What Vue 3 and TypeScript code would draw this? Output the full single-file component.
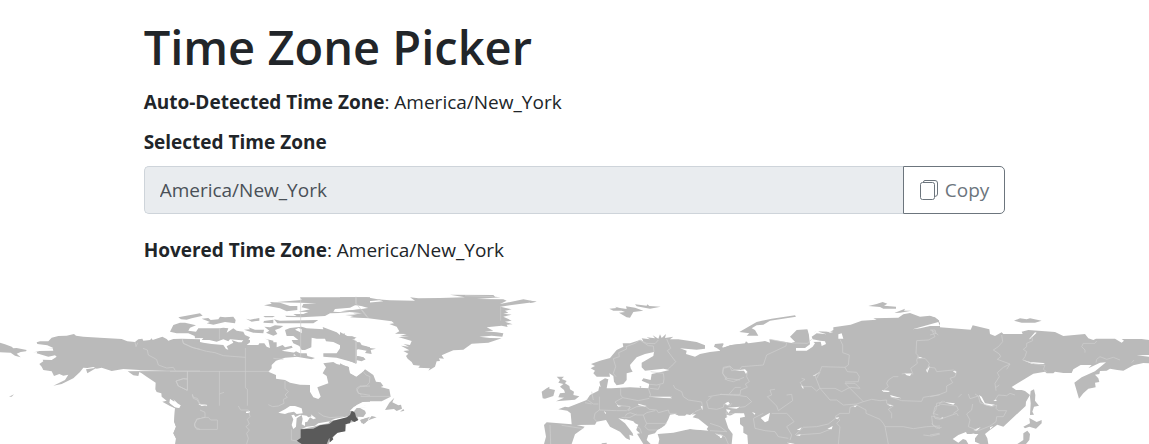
<script setup lang="ts">
import { ref } from 'vue'

interface MapSection {
  offset: number
  land: string[]
  water: string[]
  borders: string[]
}

const detected = ref('America/New_York')
const selected = ref('America/New_York')
const hovered = ref('America/New_York')

function copyZone(): void {
  navigator.clipboard?.writeText(selected.value)
}

const sections: MapSection[] = [
  {
    // Chukotka tip, Alaska and the Pacific coast
    offset: 0,
    land: [
      'M0 188L15 193L35 200L40 205L50 204L80 210L78 214L62 216L50 221L62 232L45 227L32 218L0 217Z',
      'M110 187L120 184L145 184L155 173L175 168L200 167L222 162L228 167L250 170L300 173L365 177L382 184L405 186L415 178L427 176L430 182L450 180L455 175L458 180L487 170L500 177L505 182L520 177L545 176L600 178V492H545L540 485L530 480L520 460L528 440L523 425L525 385L510 378L487 365L500 362L485 350L484 340L470 336L466 328L467 308L440 290L425 280L418 276L415 288L400 286L383 274L500 272L430 271L370 267L335 273L305 263L290 266L280 261L262 264L250 263L240 276L220 295L185 312L160 317L195 300L205 284L190 287L178 282L162 288L155 274L130 270L125 260L118 252L130 244L128 239L155 240L170 230L165 226L145 230L110 220L112 214L100 218L118 213L160 212L158 205L140 205L160 204L142 196L112 192Z',
      'M258 268L290 263L262 280Z',
      'M27 350L42 343L35 350Z',
    ],
    water: ['M510 357L515 363L527 372L522 362L532 370L530 380L542 376L538 384L525 381L508 368Z'],
    borders: ['M405 186L408 200L413 188M429 205L442 210L445 225L462 234L470 239L475 255L500 264L520 262L526 272', 'M418 273H600M562 274V331L535 318L528 303L550 296L562 297', 'M547 178L550 190L575 202L600 208', 'M577 345L580 355L592 360L600 375M600 415L590 417L583 435L590 448L600 448'],
  },
  {
    // Canada and the northern United States
    offset: 510,
    land: [
      'M0 182L25 177L45 178L80 184L100 188L125 192L160 195L168 207L175 209L170 199L190 188L185 180L205 187L215 187L222 178L240 180L240 187L230 195L265 195L268 190L283 190L290 200L300 204L295 180L285 176L310 182L310 187L320 187L320 202L338 195L345 202L365 197L368 203L335 212L375 218L370 226L385 230L345 233L318 242L305 255L305 265L295 275L318 285L318 296L345 300L360 308L390 314L420 315L420 335L430 352L445 357L452 350L442 322L475 310L470 288L458 280L468 262L460 250L490 246L500 252L535 260L540 280L560 291L585 270L600 280V365L578 366L560 375L540 392L560 400L565 420L555 425L530 430L525 453L500 458L475 492H15L18 475L10 460L18 440L12 425L15 385L0 375Z',
      'M25 112L45 108L90 100L98 107L65 115L50 119L33 118Z',
      'M10 135L30 128L45 128L78 136L60 143L55 152L78 155L85 145L150 145L160 143L175 145L170 158L190 145L200 152L220 155L225 165L240 172L235 180L215 181L180 178L175 184L160 178L140 185L118 180L95 180L100 174L75 175L74 168L55 160L20 160L0 155Z',
      'M95 116L115 114L122 120L145 118L150 110L165 112L190 110L197 120L195 130L165 126L130 134L110 130L120 126Z',
      'M228 116L240 119L268 114L268 122L245 125Z M280 108H315L308 112L285 112Z M282 123L310 119V130L280 128Z',
      'M312 118L330 122L445 120L430 130H322Z',
      'M222 149L240 148L235 142L255 149H282L280 160L250 158Z',
      'M283 140L300 142L315 136L340 138L330 145L315 150L322 162L310 167L288 158L298 152Z',
      'M282 76L305 71L300 66L330 68L360 78H382L382 90L350 94L330 85Z',
      'M312 67L395 60L390 52H600V78L555 76L540 83L495 87L490 95L540 98L480 100L465 108L395 112L350 111L345 107L380 108L370 102H400L415 96L385 95L420 88L395 82L400 72L440 70L390 68Z',
      'M515 94L575 88L600 85V113L540 111L570 107L550 101L590 99Z',
      'M345 150L360 144L395 140L410 145L460 148L458 141L500 157L510 165L525 160L522 170L550 173L545 178L555 179L545 185L570 187L575 195L600 202V208L560 206V250L500 233L460 230L460 220L500 220L510 205L515 198L490 186L468 184L465 176L440 176L425 173L424 202L405 210L395 210L388 198L370 190L365 180L385 180L370 168L350 168Z',
      'M370 220L378 214L390 220L410 220L412 228L435 234L425 238L380 230Z',
      'M530 170L545 169L560 173L550 177Z M573 200L585 198L600 205L590 211Z M560 228L580 232L585 240L560 240Z',
      'M570 420L600 410L585 430L575 430Z',
    ],
    water: [
      'M325 398L345 388L360 378L375 378L395 385L398 400L380 402L372 395L355 398L345 402Z',
      'M364 406L372 404L376 411L390 404L395 405L380 415L378 440L370 447L365 435L370 418Z',
      'M395 405L410 407L415 412L425 409L422 403L438 415L430 418L420 412L412 425L405 427L405 438L395 433L398 417Z',
      'M394 448L410 440L435 437L445 430L480 424L475 430L450 434L430 440Z M480 422L495 416L540 408L525 416L495 421Z',
      'M375 149L388 155L395 160L395 148L385 144Z',
      'M85 372L110 374L112 377L95 378Z M228 395L240 393L238 399L228 399Z M0 357L15 366L10 358L22 370L32 376L26 383L15 382L0 370Z',
      'M540 392L552 380L575 375L600 378V383L560 384L552 394Z',
    ],
    borders: [
      'M0 274H298M52 274V331L25 318L18 303L40 296L52 297',
      'M37 178L40 190L70 203L110 214L135 218L160 227L226 232M226 204V323L232 328V377',
      'M148 274V377M148 342L162 337M148 145V178M392 52V230M558 50V70L590 110M558 185V250M310 235L340 238',
      'M67 342L70 352L82 355L90 372L110 378M205 378L212 390H235L240 410L232 418L238 432L228 440L238 450L230 460L235 475L230 492',
      'M90 390L105 397V412L82 418L74 430L75 442L90 448H142V420L122 420L115 412H95M345 302V325L355 335L345 345L352 352L340 358L342 370L325 378L308 380L295 374M445 398L460 408L480 413L520 410M364 448V480L390 485M600 318L570 320L560 330L565 340L600 346',
    ],
  },
  {
    // Greenland, Labrador and the Atlantic provinces
    offset: 1020,
    land: [
      'M0 52H80L125 60L60 66L30 72L28 78H0Z',
      'M0 94L60 88L85 84L50 74L75 69L130 64L110 58L150 61L225 62L210 52L235 55L300 54L375 52L330 44L460 45L465 50L482 52L410 57L490 58L500 62L480 72L550 58L590 65L500 77L482 80L515 88L495 92L505 98L490 101L515 104L490 110L515 122L495 125L518 133L500 134L503 141L485 137L440 142L460 152L433 154L470 157L490 160L487 170L455 167L418 170L450 174L485 175L445 188L395 191L370 209L340 211L322 218L305 226L312 236L297 235L300 243L290 244L285 260L265 272L270 265L235 263L240 257L220 255L215 246L203 236L198 228L205 221L190 213L208 211L183 197L207 200L190 192L210 195L215 183L175 171L207 170L180 168L200 162L165 161L178 154L170 140L148 132L162 130L155 124L85 115L30 112L42 108L15 105L70 103L55 98Z',
      'M0 156L22 168L40 170L45 177L35 178L50 183L48 195L65 201L108 206L92 210L95 222L75 219L80 212L55 208L48 210V251L0 230Z',
      'M52 228L70 232L65 228L77 238L65 244L48 240Z',
      'M0 250L10 255L27 262L28 280L48 291L70 275L75 268L100 285L108 305L122 307L130 318L122 321L148 328L152 350L125 364H62L45 377L22 402L0 415Z',
      'M45 382L75 377L82 381L60 384L75 392L78 400L70 411L52 410L35 398Z',
      'M62 420L80 414L85 420L95 408L110 412L85 421L70 433Z',
      'M135 390L148 368L163 353L157 367L175 376L183 374L186 386L170 393L162 387Z M180 395L190 387L193 392Z',
    ],
    water: [],
    borders: ['M48 52V72M65 88L85 114M482 78V122M375 47L460 50', 'M70 275L78 285L90 290L88 308L80 317L60 318L50 325L55 338L65 345M62 349H150M48 183V251'],
  },
  {
    // Europe and Svalbard
    offset: 1590,
    land: [
      'M0 62L20 65L0 69Z',
      'M238 86L260 84L255 80L270 84L290 87L288 79L315 83L340 92L310 96L300 113L290 112L267 98L285 96L275 92L250 92Z',
      'M315 73L350 77L352 73L358 78L392 80L360 86L320 79Z',
      'M183 252L210 242L240 234L260 210L280 200L278 190L300 190L330 180L340 184L335 175L360 178L350 172L375 175L368 166L385 176L390 163L395 174L408 162L405 174L430 170L420 178L445 178L500 186L525 196L525 206L500 209L450 205L470 212L468 222L495 230L510 222L540 216L572 212L560 204L552 200L555 192L580 190V195L572 198L580 204L600 196L630 192V492H385L388 478L383 462L430 458L480 447L535 452L520 436L495 425L465 418L440 405L420 410L412 432L400 442L382 450L375 460L355 465L350 480L362 492H340L320 460L318 440L290 420L278 417L265 415L285 430L308 460L310 468L298 464L300 480L288 475L270 455L240 440L228 420L200 425L195 434L140 435L164 440L158 446L135 463L125 492H42L48 470L42 435L50 427L125 433L122 400L112 392L85 388L105 380L115 382L170 360L180 345L205 332L208 318L212 322L208 305L225 295L235 298L230 325L245 325L300 322L355 325L358 312L335 302L340 295L362 300L365 282L390 277L418 270L400 266L345 272L335 262L335 248L370 228L372 216L345 222L320 232L300 255L302 265L308 275L290 280V300L280 312L260 316L252 305L250 288L238 280L240 290L200 290L190 280L195 272L182 265L195 258Z',
      'M80 290L102 290L95 297L110 303L105 310L118 318L120 328L132 335L130 345L148 349L135 359L78 364L102 353L85 352L90 340L105 338L102 330L90 320L100 312L85 308L90 300Z',
      'M38 355L35 335L50 325L58 320L58 326L75 330L70 348L45 356Z',
      'M215 490L230 488V492H215Z',
      'M328 320L334 318L332 324Z',
    ],
    water: [
      'M358 350L420 350L426 355L400 354Z M325 371L350 378L345 380L325 375Z M285 417L310 424L315 430L325 434L318 450L330 460L318 462L310 440L290 425Z',
      'M420 404L435 402L445 407H465L470 403L480 405L495 396L485 404L498 402L488 412L505 416L535 440L530 447L510 449L480 447L430 451L395 457L383 462L382 452L405 436L415 418Z',
      'M557 462L578 465L575 474Z M512 377L519 380L517 390Z M222 393L228 398L226 403Z M260 374L275 378L265 380Z M618 425L630 410V432H620Z M590 404L605 408L600 412L590 410Z',
    ],
    borders: [
      'M250 236L257 260L250 280L258 290M250 236L268 230L266 218L290 207L288 200L315 190L330 180L355 197L370 198L372 216M330 180L350 190L375 191L385 180M410 177L422 205L412 212L437 245L425 258L415 266',
      'M362 275L400 280L402 295L400 310L380 315L360 313M360 325L385 328L390 315M355 325L362 345L358 350L426 350M430 315L435 325L455 335L460 350L475 360L515 366L518 385L495 395',
      'M272 325V345L278 353L325 362L358 355M278 353L255 366L265 376L300 380M208 350V390L260 392M208 390L195 400L192 415L200 425M170 358L190 372H205M185 335L190 360M165 368L185 372M300 380L295 392L320 380L345 378L358 388L380 390L385 398L415 390L418 400H440M260 392H290L302 382M285 410L290 402L300 398L320 405L340 405L350 398L375 392M275 412L300 412L320 402M340 405L345 420L350 430H410M350 430L345 440L355 450L382 450M320 440L330 445L335 460',
      'M535 350L575 343H630M545 350L530 365L535 385L560 388L580 382L582 372L600 378L605 370M580 262L600 258L610 268L630 272M580 262L578 280L590 295L630 300M585 300L590 290M540 452L590 455L570 440L540 430M555 460L585 470L595 492M60 435L62 492M95 436L160 446M590 390L588 402L630 400',
    ],
  },
  {
    // Central Russia and Central Asia
    offset: 2160,
    land: [
      'M0 192L10 194L5 204L35 195L75 190L78 184L85 190L135 183L150 188L148 178L215 189L225 185L210 170L230 150L262 148L268 165L280 162L288 154L330 155L340 150L340 142L392 134L425 122L470 119L460 115L535 113L550 103L570 99L600 110L630 107L655 120L660 130V492H0Z',
      'M58 156L80 143L110 126L155 116L225 106L228 110L150 122L130 134L110 136L95 145L105 150L115 167H80L88 160Z',
      'M445 78L470 72L488 66L502 71L492 77L528 80V86H490L480 81Z',
      'M523 99L555 86L552 92L574 92L540 98Z',
    ],
    water: [
      'M265 150L275 162L285 156L290 150L300 157L320 163L290 160L275 170L278 178L300 182L315 184L318 192L305 198L302 185L275 186L270 178L285 190L278 200L260 212L228 212V204L255 204L270 193Z',
      'M355 163L365 160L370 176L355 176Z M578 148L655 126L660 138L630 138L600 145Z M318 152L340 156L330 158Z',
      'M15 415L45 400H72L75 410L58 414L55 428L70 440L70 458L82 465L84 492H35L38 462L25 445Z',
      'M122 414L150 398L145 422L135 427Z M96 396L106 400L104 404Z M15 370L25 365L30 372L22 376Z M18 388L32 390L25 400Z M0 465L5 474L0 474Z M22 383L60 380L50 386Z',
      'M242 315L250 320V328Z M278 288L298 277L285 288Z M228 466L242 462L240 468Z M322 447L338 438L335 448Z M200 488L225 490L210 492Z M230 450L245 442L240 450Z M345 413L358 412L352 418Z M400 378L412 376L405 382Z',
      'M553 280L575 280L570 288L560 286Z M485 330L510 333L505 336L490 335Z M510 345L545 355L515 352Z M500 373L520 376L512 379Z M618 270L630 258L622 278Z M45 272L75 268L82 275L78 282L72 272Z M592 230L608 232L600 235Z',
    ],
    borders: [
      'M150 178L200 188L198 198L140 225L130 255L65 260L60 268L35 272L30 260L10 265L8 280L20 300L40 305L60 297L72 292M82 275L80 290L88 305L76 312L82 322L62 330L60 345M62 322L45 322L28 342M0 343L60 347L80 350L95 365L75 380L60 382',
      'M215 189L262 190L275 178M360 178L368 195V218L388 225L385 255L375 262L305 260L300 275L285 287L300 325L345 325L365 335L390 322L420 325L405 310H375L430 365L455 358L480 362L500 360V370L520 378L505 388L515 400V415M375 262L382 275L410 277L418 290L415 305L375 306M300 325L330 360H350L370 375L410 372L430 365M245 295L255 298L240 308L250 320H275L290 333L300 325',
      'M165 328L150 330L155 345L142 350L150 358L170 378L175 392L192 380L218 362L215 343L200 345M155 400H200L210 410L222 425L200 440L215 465L210 480M130 400L100 415L105 445L135 452L165 455L175 470L205 475M225 465L250 442L290 440L325 432L350 412L360 420L350 430L360 440L355 492M230 465L300 460L330 448M345 410L360 400H388L390 382L410 375L438 390V400L480 418L490 430L495 440L505 492M495 440L550 440L580 446L620 440L660 438M510 350L545 362L605 364L610 352L660 344',
      'M655 165L635 150L645 170L625 180L590 182L588 220L595 228L590 240L592 250L572 265L578 280M592 235L615 235L628 250L620 275M535 290H520L505 300L500 310L505 320L490 332M660 375L645 380L640 400L655 405M660 415L635 408L638 435L660 446M610 465L635 468L660 462M280 288L300 277L290 295M545 282L555 280L580 282',
    ],
  },
  {
    // Eastern Siberia, Kamchatka and Japan
    offset: 2790,
    land: [
      'M0 137L20 135L30 142L122 149L128 136L178 148L180 162L195 168L215 157L220 162H278L275 155L295 150L375 156L400 168L465 162L475 175L490 180L498 176L555 176L575 188L582 182L575 177L635 177L657 180V225L620 226L657 230V250L640 249L610 256L580 272L562 270L540 266L530 272L510 273L508 282L495 284L505 295L508 306L495 308L497 322L475 326L460 340L447 356L433 308L455 292L495 274L528 247L510 248L475 265L485 255H452L430 268L425 279L400 279L375 275L370 280H350L345 275L310 281L245 321L258 330H275L285 333L300 345L288 365L287 378L220 440L202 434L180 450L165 462L172 475L175 492H150L135 485V475L145 462L110 462L100 472L92 475L108 480L115 492H0Z',
      'M0 108L15 112L28 122L20 128L0 132Z',
      'M252 122L270 115L290 118L300 115L335 122L315 128H275Z',
      'M302 333L312 328L316 345L315 362L327 377L312 380L307 395L312 404L300 405L302 370L300 350Z',
      'M298 414L320 426L335 420L335 430L318 446L298 440L285 445L280 440L300 430Z',
      'M280 460L292 452L300 462L298 480L288 492H262L280 480Z',
    ],
    water: [
      'M297 178L315 157L320 158L300 177Z M278 240L300 246L340 249L345 252L305 251Z',
      'M147 345L155 350L165 370L195 374L185 378L165 375L155 362Z M190 363L198 358L200 363Z',
      'M68 274L78 273V280Z M43 367L75 370L70 374Z M30 415L40 412L38 416Z M68 477L85 465L108 456L112 464L135 460L115 470L98 478L85 488Z M130 450L152 442L140 452Z M180 442L190 438L180 448Z',
    ],
    borders: [
      'M215 165L218 185L205 200L190 210L208 222L212 230L202 238L240 252L220 262L202 278L208 290L195 310L198 332M208 315L198 322M240 252L230 268',
      'M305 170L308 182L290 190V200L280 208L290 215L285 230L278 240L315 252L345 256L340 268L350 275M500 183L495 190L460 190L455 200L465 210V218M570 240L550 232L530 238L510 230L500 238L498 248M605 248L612 240',
      'M0 150L15 150L18 160L0 165M0 262L15 264L20 275L70 270L80 275L75 290L60 295L68 308L50 318V335L25 345L0 350M45 365L20 370L18 388L10 400L15 415L30 418L80 400L85 408M38 362L28 372L80 378L85 390L70 400M95 342L85 352M115 342L120 356L145 348L150 368L185 380L200 375L198 385L205 392H230L220 410H200L198 425L180 438L145 452L115 440M145 348L135 342M128 372L125 390L110 402L120 420L115 440M195 360L205 345L230 347L240 340L255 345M5 430L20 445L35 442M0 465L28 460',
    ],
  },
]
</script>

<template>
  <main class="page">
    <section class="details">
      <h1>Time Zone Picker</h1>
      <p class="line"><strong>Auto-Detected Time Zone</strong>: {{ detected }}</p>
      <label class="line label" for="selected-zone">Selected Time Zone</label>
      <div class="input-group">
        <input id="selected-zone" v-model="selected" type="text" readonly />
        <button type="button" @click="copyZone">
          <svg class="copy-icon" viewBox="0 0 20 22" aria-hidden="true">
            <path d="M4.5 3.5V3Q4.5 1.5 6 1.5H16Q18.5 1.5 18.5 4V15Q18.5 17.5 15.5 17.5" />
            <rect x="1.5" y="3.5" width="14" height="17" rx="2" />
          </svg>
          <span>Copy</span>
        </button>
      </div>
      <p class="line"><strong>Hovered Time Zone</strong>: {{ hovered }}</p>
    </section>
    <svg class="map" viewBox="0 0 3447 492" role="img" aria-label="World time zone map">
      <g v-for="section in sections" :key="section.offset" :transform="`translate(${section.offset} 0)`">
        <path v-for="d in section.land" :key="d" class="land" :d="d" />
      </g>
      <g v-for="section in sections" :key="section.offset" :transform="`translate(${section.offset} 0)`">
        <path v-for="d in section.water" :key="d" class="water" :d="d" />
        <path v-for="d in section.borders" :key="d" class="border" :d="d" />
      </g>
      <g transform="translate(510 0)">
        <path
          class="active"
          d="M392 448L430 446L450 436L478 432L490 422L530 412L540 405L545 392L555 398L558 410L565 420L553 426L543 420L540 430L526 433V454L503 458L487 472L490 478L480 487L478 473L470 492H395L380 482L392 474Z"
        />
      </g>
    </svg>
  </main>
</template>

<style>
body {
  margin: 0;
  background: #fff;
}
</style>

<style scoped>
.page {
  overflow: hidden;
  color: #212529;
  font-family: 'Segoe UI', 'Open Sans', 'Noto Sans', sans-serif;
  font-size: 19px;
  line-height: 30px;
}

.details {
  width: 75%;
  margin: 0 auto;
  padding-top: 17px;
}

h1 {
  margin: 0 0 10px;
  font-size: 47px;
  font-weight: 600;
  line-height: 60px;
}

.line {
  margin: 0 0 10px;
}

.label {
  display: block;
  margin-bottom: 9px;
  font-weight: 700;
}

strong {
  font-weight: 700;
}

.input-group {
  display: flex;
  margin-bottom: 21px;
}

input,
button {
  box-sizing: border-box;
  height: 48px;
  padding: 8px 15px;
  font: inherit;
}

input {
  flex: 1;
  min-width: 0;
  border: 1px solid #ced4da;
  border-right: 0;
  border-radius: 5px 0 0 5px;
  background: #e9ecef;
  color: #495057;
  outline: 0;
}

button {
  display: flex;
  align-items: center;
  gap: 6px;
  border: 1px solid #6c757d;
  border-radius: 0 5px 5px 0;
  background: #fff;
  color: #6c757d;
  cursor: pointer;
}

.copy-icon {
  width: 20px;
  height: 22px;
  fill: none;
  stroke: currentColor;
  stroke-width: 1;
}

.map {
  display: block;
  width: 100%;
  margin-top: 15px;
}

.land {
  fill: #bababa;
}

.water {
  fill: #fff;
}

.border {
  fill: none;
  stroke: #d0d0d0;
  stroke-width: 2;
}

.active {
  fill: #5a5a5a;
}
</style>
